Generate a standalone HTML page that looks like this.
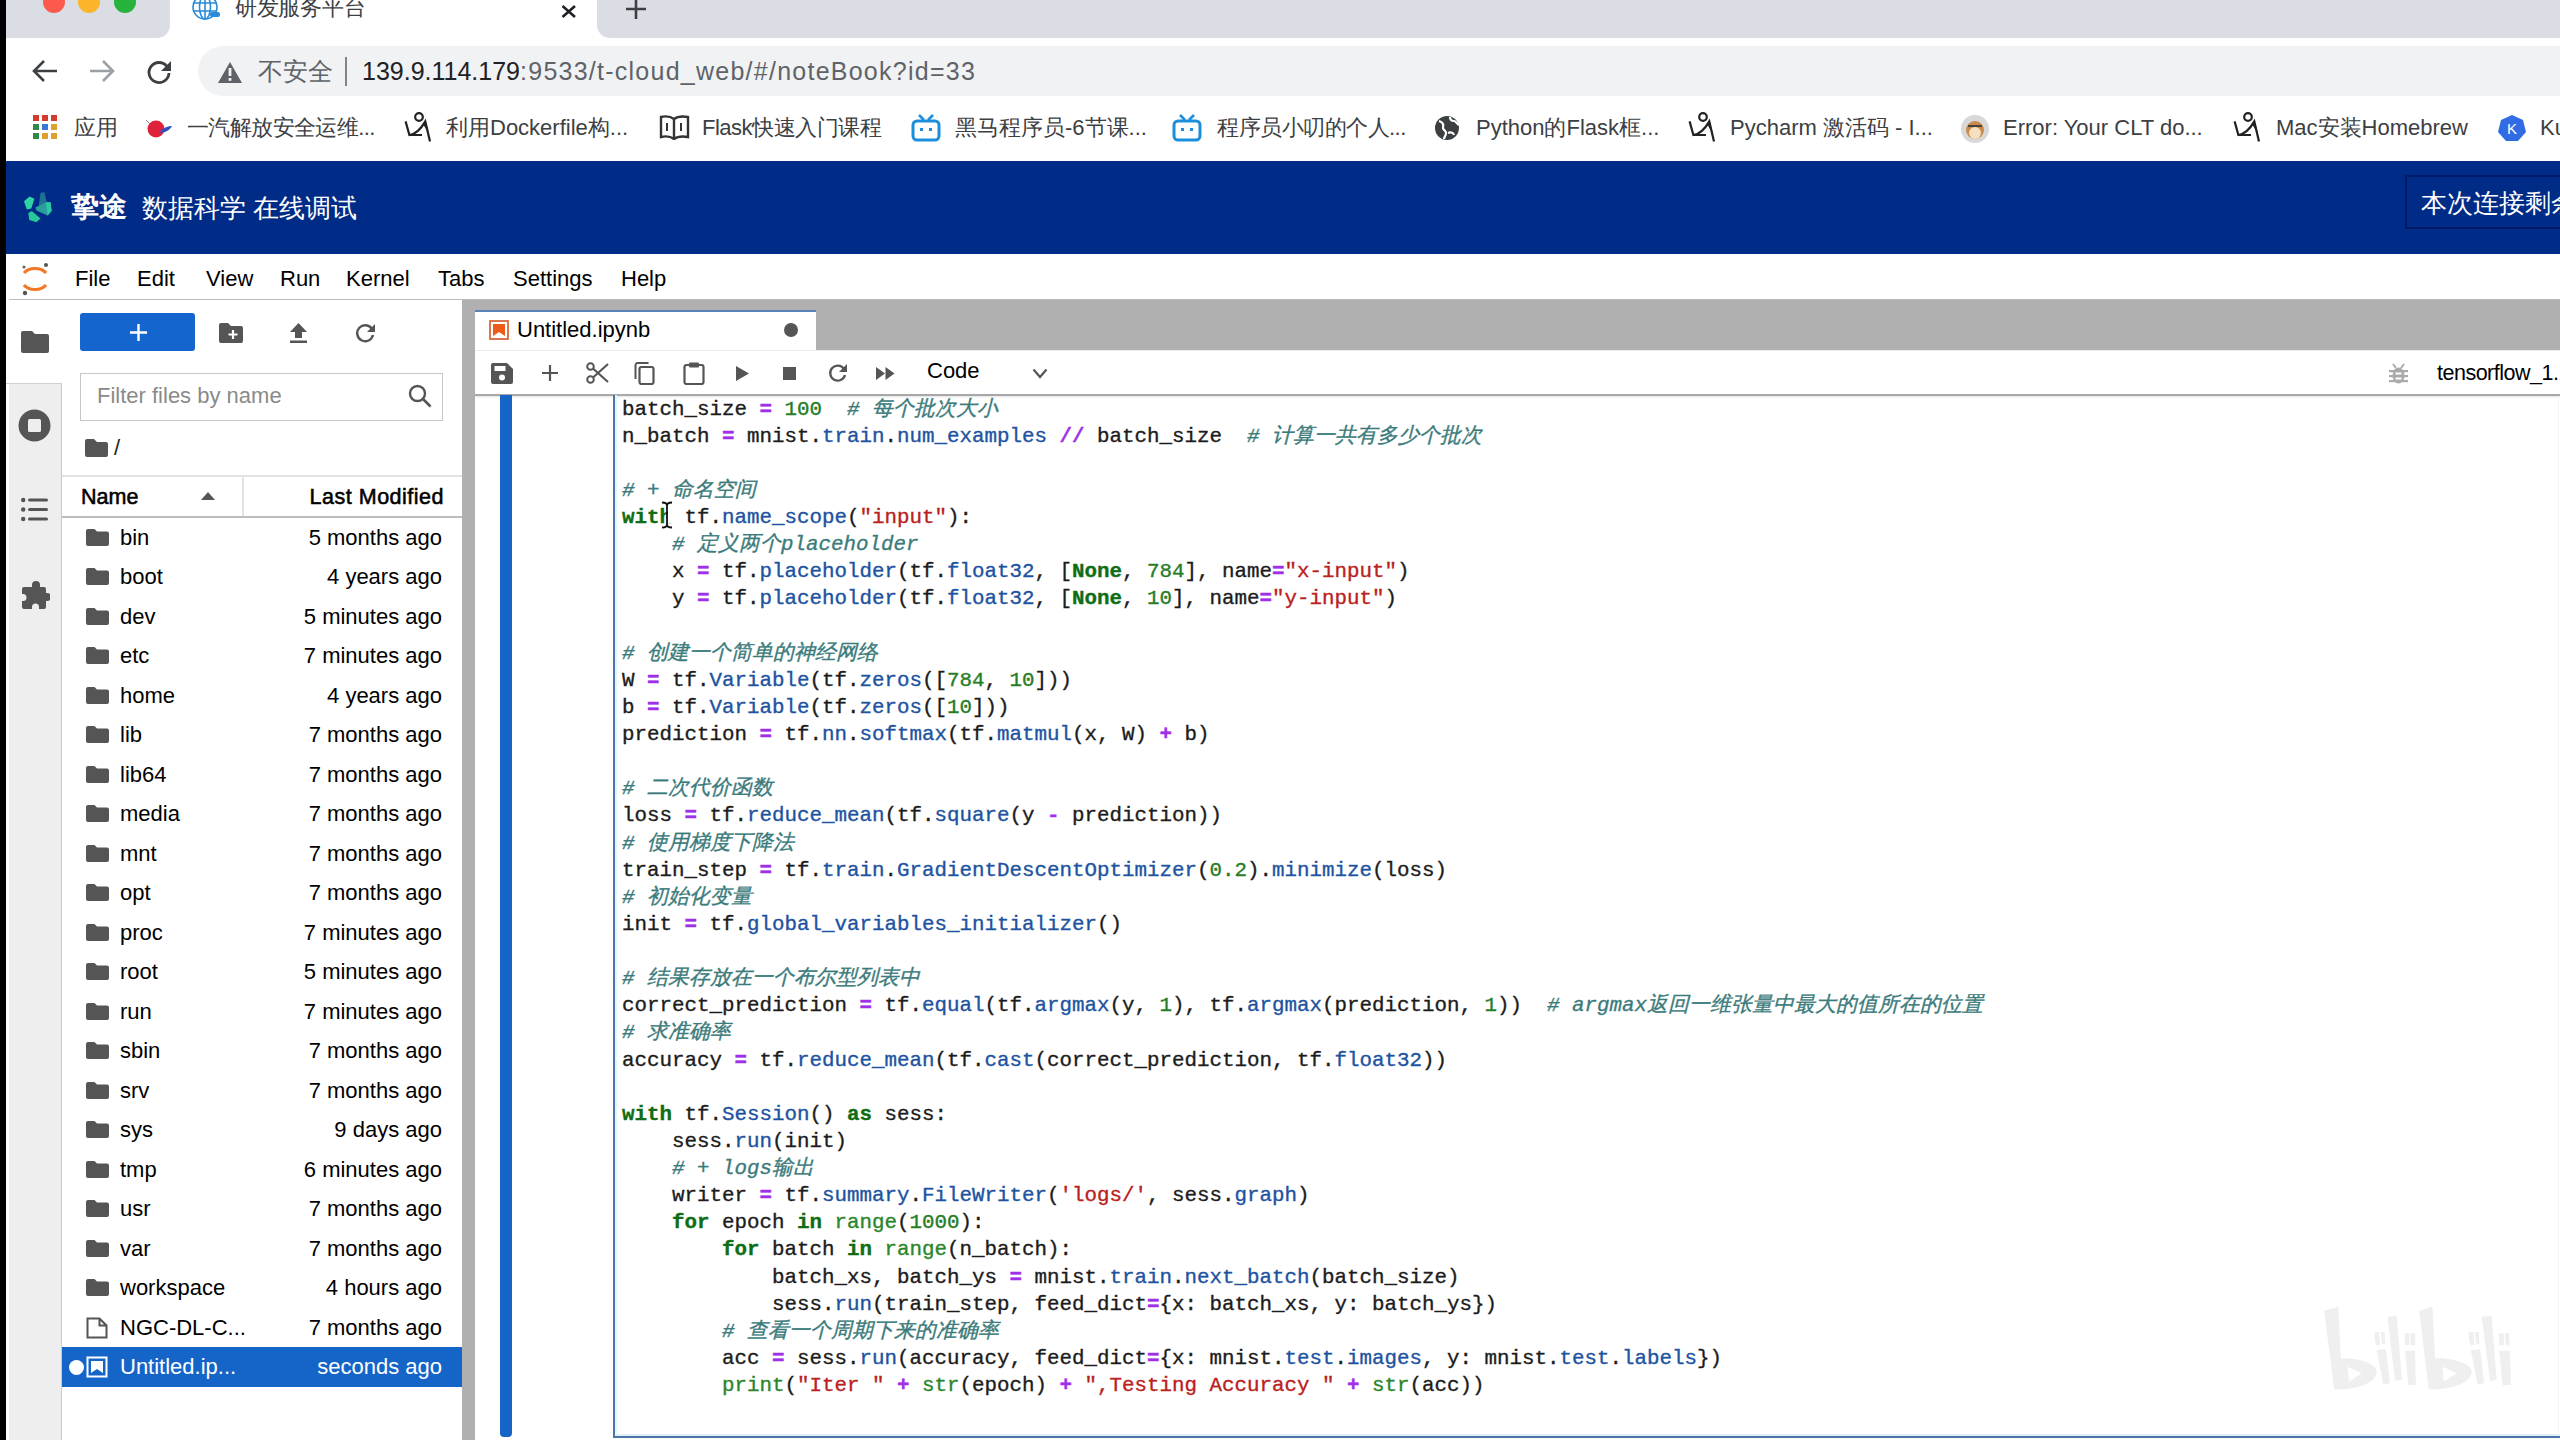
<!DOCTYPE html>
<html><head><meta charset="utf-8">
<style>
*{box-sizing:border-box}
html,body{margin:0;padding:0}
body{width:2560px;height:1440px;overflow:hidden;position:relative;background:#fff;font-family:"Liberation Sans",sans-serif;color:#222}
.a{position:absolute}
svg{display:block}
/* chrome */
.bm{position:absolute;top:113px;height:30px;font-size:22px;line-height:30px;color:#3c4043;white-space:nowrap}
/* menu */
.mi{position:absolute;top:264px;font-size:22px;line-height:30px;color:#000}
/* file rows */
.row{position:absolute;left:62px;width:400px;height:39.52px}
.fn{position:absolute;left:58px;top:0;font-size:22px;line-height:39.52px;color:#000;white-space:nowrap}
.fm{position:absolute;right:20px;top:0;font-size:22px;line-height:39.52px;color:#000;white-space:nowrap;text-align:right}
.fi{position:absolute;left:24px;top:11px}
/* code */
#code{position:absolute;left:622px;top:395.6px;font-family:"Liberation Mono",monospace;font-size:20.83px;line-height:27.13px;white-space:pre;color:#1c1c1c;-webkit-text-stroke:0.35px currentColor}
#code div{height:27.13px}
.k{color:#0f6e14;font-weight:bold}
.n{color:#267d26}
.s{color:#ba2121}
.c{color:#3b7b7b;font-style:italic}
.o{color:#a030e8;font-weight:bold}
.p{color:#1d53a0}
.b{color:#2a862a}
</style></head>
<body>
<!-- black strip left -->
<div class="a" style="left:0;top:0;width:6px;height:1440px;background:#000;z-index:50"></div>

<!-- ===== Chrome tab strip ===== -->
<div class="a" style="left:6px;top:0;width:164px;height:38px;background:#dadde3;border-bottom-right-radius:13px"></div>
<div class="a" style="left:597px;top:0;width:1963px;height:38px;background:#dadde3;border-bottom-left-radius:13px"></div>
<div class="a" style="left:43px;top:-9px;width:22px;height:22px;border-radius:50%;background:#fd5a4e"></div>
<div class="a" style="left:78px;top:-9px;width:22px;height:22px;border-radius:50%;background:#fcb52a"></div>
<div class="a" style="left:114px;top:-9px;width:22px;height:22px;border-radius:50%;background:#26b33b"></div>
<!-- tab globe icon -->
<svg class="a" style="left:191px;top:-6px" width="30" height="28" viewBox="0 0 30 28"><g fill="none" stroke="#2a8ad8" stroke-width="1.6"><circle cx="14" cy="13" r="12"/><ellipse cx="14" cy="13" rx="5.5" ry="12"/><path d="M2 9h24M2 17h24M14 1v24"/></g><rect x="19" y="18" width="10" height="5" rx="2" fill="#2a8ad8"/></svg>
<div class="a" style="left:235px;top:-7px;font-size:22px;line-height:30px;color:#3c4043;white-space:nowrap;letter-spacing:-0.3px">研发服务平台</div>
<svg class="a" style="left:559px;top:5px" width="20" height="13" viewBox="0 0 20 13"><path d="M3.5 1L16 12M16 1L3.5 12" stroke="#202124" stroke-width="2.6"/></svg>
<svg class="a" style="left:624px;top:-2px" width="24" height="22" viewBox="0 0 24 22"><path d="M12 0v21M2 11h20" stroke="#3c4043" stroke-width="2.6"/></svg>

<!-- ===== Address row ===== -->
<svg class="a" style="left:31px;top:58px" width="28" height="26" viewBox="0 0 28 26"><path d="M26 13H5M13 3L3 13l10 10" fill="none" stroke="#3c4043" stroke-width="2.6"/></svg>
<svg class="a" style="left:88px;top:58px" width="28" height="26" viewBox="0 0 28 26"><path d="M2 13h21M15 3l10 10-10 10" fill="none" stroke="#9aa0a6" stroke-width="2.6"/></svg>
<svg class="a" style="left:145px;top:58px" width="28" height="28" viewBox="0 0 28 28"><path d="M22 8.5A10 10 0 1 0 24 15" fill="none" stroke="#3c4043" stroke-width="2.8"/><path d="M26 3v10H16z" fill="#3c4043"/></svg>
<div class="a" style="left:198px;top:46px;width:2400px;height:50px;border-radius:25px;background:#f0f2f4"></div>
<svg class="a" style="left:218px;top:62px" width="24" height="21" viewBox="0 0 24 21"><path d="M12 0L24 21H0z" fill="#5f6368"/><rect x="10.6" y="6" width="2.8" height="8" fill="#f0f2f4"/><rect x="10.6" y="16" width="2.8" height="2.8" fill="#f0f2f4"/></svg>
<div class="a" style="left:258px;top:55px;font-size:25px;line-height:32px;color:#5f6368;white-space:nowrap">不安全</div>
<div class="a" style="left:345px;top:57px;width:2px;height:29px;background:#80868b"></div>
<div class="a" style="left:362px;top:55px;font-size:25px;line-height:32px;color:#5f6368;white-space:nowrap"><span style="color:#202124">139.9.114.179</span><span style="letter-spacing:1.25px">:9533/t-cloud_web/#/noteBook?id=33</span></div>



<!-- ===== Bookmarks ===== -->
<svg class="a" style="left:33px;top:115px" width="25" height="25" viewBox="0 0 25 25">
<rect x="0" y="0" width="6" height="6" fill="#d33b2c"/><rect x="9" y="0" width="6" height="6" fill="#d33b2c"/><rect x="18" y="0" width="6" height="6" fill="#d33b2c"/>
<rect x="0" y="9" width="6" height="6" fill="#2f8a4a"/><rect x="9" y="9" width="6" height="6" fill="#3a78d8"/><rect x="18" y="9" width="6" height="6" fill="#e0a030"/>
<rect x="0" y="18" width="6" height="6" fill="#2f8a4a"/><rect x="9" y="18" width="6" height="6" fill="#e0a030"/><rect x="18" y="18" width="6" height="6" fill="#e0a030"/></svg>
<div class="bm" style="left:74px">应用</div>
<svg class="a" style="left:144px;top:117px" width="30" height="22" viewBox="0 0 30 22"><circle cx="12" cy="12" r="8.5" fill="#e0213a"/><path d="M16 16c5 0 10-3 12-7-4 0-8 2-11 4z" fill="#3050c0"/><path d="M2 3l4 4" stroke="#888" stroke-width="1"/></svg>
<div class="bm" style="left:187px;letter-spacing:-0.6px">一汽解放安全运维...</div>
<svg class="a" style="left:403px;top:112px" width="30" height="32" viewBox="0 0 30 32"><circle cx="16" cy="5" r="3.8" fill="none" stroke="#222" stroke-width="2.2"/><path d="M2.6 9.4L6.4 23Q15 22 22.3 9.4L27 29.5M6.4 23H19" fill="none" stroke="#222" stroke-width="2.2"/><path d="M20 12L23 10L26 22z" fill="#222"/></svg>
<div class="bm" style="left:446px">利用Dockerfile构...</div>
<svg class="a" style="left:659px;top:114px" width="31" height="26" viewBox="0 0 31 26"><path d="M2 3c4-1 9-1 13 2 4-3 9-3 14-2v20c-5-1-10-1-14 2-4-3-9-3-13-2z M15 5v20" fill="none" stroke="#333" stroke-width="2.4"/><path d="M8 9v8M22 9v8" stroke="#333" stroke-width="2"/></svg>
<div class="bm" style="left:702px;letter-spacing:-0.5px">Flask快速入门课程</div>
<svg class="a" style="left:911px;top:114px" width="30" height="28" viewBox="0 0 30 28"><rect x="2" y="7" width="26" height="19" rx="4" fill="none" stroke="#1c8fdc" stroke-width="3"/><path d="M8 1l5 5M22 1l-5 5" stroke="#1c8fdc" stroke-width="2.6"/><rect x="9" y="14" width="3" height="3" fill="#1c8fdc"/><rect x="18" y="14" width="3" height="3" fill="#1c8fdc"/></svg>
<div class="bm" style="left:955px">黑马程序员-6节课...</div>
<svg class="a" style="left:1172px;top:114px" width="30" height="28" viewBox="0 0 30 28"><rect x="2" y="7" width="26" height="19" rx="4" fill="none" stroke="#1c8fdc" stroke-width="3"/><path d="M8 1l5 5M22 1l-5 5" stroke="#1c8fdc" stroke-width="2.6"/><rect x="9" y="14" width="3" height="3" fill="#1c8fdc"/><rect x="18" y="14" width="3" height="3" fill="#1c8fdc"/></svg>
<div class="bm" style="left:1217px;letter-spacing:-0.5px">程序员小叨的个人...</div>
<svg class="a" style="left:1434px;top:115px" width="26" height="26" viewBox="0 0 26 26"><circle cx="13" cy="13" r="12" fill="#3c4043"/><path d="M5 6c3 1 5 3 4 6s3 3 3 6-2 4-2 6M16 2c0 3 2 4 4 4s3 3 5 4M14 18c2-1 5-1 6 2" fill="none" stroke="#fff" stroke-width="2.2"/></svg>
<div class="bm" style="left:1476px">Python的Flask框...</div>
<svg class="a" style="left:1687px;top:112px" width="30" height="32" viewBox="0 0 30 32"><circle cx="16" cy="5" r="3.8" fill="none" stroke="#222" stroke-width="2.2"/><path d="M2.6 9.4L6.4 23Q15 22 22.3 9.4L27 29.5M6.4 23H19" fill="none" stroke="#222" stroke-width="2.2"/><path d="M20 12L23 10L26 22z" fill="#222"/></svg>
<div class="bm" style="left:1730px">Pycharm 激活码 - I...</div>
<svg class="a" style="left:1960px;top:114px" width="30" height="30" viewBox="0 0 30 30"><circle cx="15" cy="15" r="14" fill="#d8d8d8"/><circle cx="15" cy="16" r="9" fill="#c98a4a"/><circle cx="15" cy="19" r="6" fill="#f5e0c0"/><path d="M8 12h14" stroke="#444" stroke-width="2"/></svg>
<div class="bm" style="left:2003px">Error: Your CLT do...</div>
<svg class="a" style="left:2232px;top:112px" width="30" height="32" viewBox="0 0 30 32"><circle cx="16" cy="5" r="3.8" fill="none" stroke="#222" stroke-width="2.2"/><path d="M2.6 9.4L6.4 23Q15 22 22.3 9.4L27 29.5M6.4 23H19" fill="none" stroke="#222" stroke-width="2.2"/><path d="M20 12L23 10L26 22z" fill="#222"/></svg>
<div class="bm" style="left:2276px">Mac安装Homebrew</div>
<svg class="a" style="left:2498px;top:114px" width="28" height="28" viewBox="0 0 28 28"><path d="M14 1l11 5 3 12-8 9H8l-8-9 3-12z" fill="#326ce5"/><text x="14" y="20" font-size="15" fill="#fff" text-anchor="middle" font-family="Liberation Sans">K</text></svg>
<div class="bm" style="left:2540px">Ku</div>

<!-- ===== Blue header ===== -->
<div class="a" style="left:6px;top:161px;width:2554px;height:93px;background:#002b87"></div>
<svg class="a" style="left:23px;top:191px" width="31" height="33" viewBox="0 0 31 33"><path d="M17.5 1.7L21.5 1.2L23.6 10.8L15.4 17Z" fill="#1f6f96"/><path d="M1 10.3L6.6 5.5L11.4 7.8L8.3 17.4L3.8 18.5Z" fill="#2fd4a4"/><path d="M5.3 22L8.8 20L17.5 27.6L13.4 31.2L6.3 29.1Z" fill="#25c896"/><path d="M12.4 16.4L23.6 10.8L27.6 11.3L28.6 20L24.6 24.6L13.4 19.5Z" fill="#2a9e9c"/><path d="M23 11.5L27.6 11.3L28.6 20L24.6 24.6Z" fill="#2cc9a4"/></svg>
<div class="a" style="left:71px;top:190px;font-size:28px;line-height:34px;color:#fff;font-weight:bold;white-space:nowrap">挚途</div>
<div class="a" style="left:142px;top:191px;font-size:26px;line-height:34px;color:#fff;white-space:nowrap">数据科学 在线调试</div>
<div class="a" style="left:2405px;top:175px;width:200px;height:54px;border:2px solid #001a66;background:#002b87"></div>
<div class="a" style="left:2421px;top:186px;font-size:26px;line-height:34px;color:#fff;white-space:nowrap">本次连接剩余时间</div>

<!-- ===== Jupyter menubar ===== -->
<div class="a" style="left:6px;top:254px;width:2554px;height:45px;background:#fff"></div>
<svg class="a" style="left:20px;top:261px" width="30" height="36" viewBox="0 0 30 36"><path d="M4 12c5-6 17-6 22 0" fill="none" stroke="#f37726" stroke-width="3.2"/><path d="M4 24c5 6 17 6 22 0" fill="none" stroke="#f37726" stroke-width="3.2"/><circle cx="26" cy="4" r="2" fill="#555"/><circle cx="4" cy="6" r="1.6" fill="#666"/><circle cx="5" cy="32" r="2.2" fill="#555"/></svg>
<div class="mi" style="left:75px">File</div>
<div class="mi" style="left:137px">Edit</div>
<div class="mi" style="left:206px">View</div>
<div class="mi" style="left:280px">Run</div>
<div class="mi" style="left:346px">Kernel</div>
<div class="mi" style="left:438px">Tabs</div>
<div class="mi" style="left:513px">Settings</div>
<div class="mi" style="left:621px">Help</div>


<!-- ===== Left activity sidebar ===== -->
<div class="a" style="left:9px;top:299px;width:53px;height:1141px;background:#eeeeee;border-right:1px solid #c9c9c9"></div>
<div class="a" style="left:6px;top:299px;width:56px;height:85px;background:#fff"></div>
<div class="a" style="left:6px;top:383px;width:56px;height:1px;background:#d0d0d0"></div>
<svg class="a" style="left:21px;top:330px" width="28" height="24" viewBox="0 0 28 24"><path d="M2 1h9l3 3h12a2 2 0 0 1 2 2v15a2 2 0 0 1-2 2H2a2 2 0 0 1-2-2V3a2 2 0 0 1 2-2z" fill="#555"/></svg>
<svg class="a" style="left:18px;top:409px" width="33" height="33" viewBox="0 0 33 33"><circle cx="16.5" cy="16.5" r="16" fill="#555"/><rect x="10" y="10" width="13" height="13" rx="1.5" fill="#eee"/></svg>
<svg class="a" style="left:21px;top:497px" width="27" height="25" viewBox="0 0 27 25"><g fill="#555"><circle cx="2.2" cy="3" r="2.2"/><circle cx="2.2" cy="12.5" r="2.2"/><circle cx="2.2" cy="22" r="2.2"/><rect x="7" y="1.5" width="20" height="3" rx="1.5"/><rect x="7" y="11" width="20" height="3" rx="1.5"/><rect x="7" y="20.5" width="20" height="3" rx="1.5"/></g></svg>
<svg class="a" style="left:20px;top:580px" width="30" height="31" viewBox="0 0 30 31"><path d="M8 7h4V5a4 4 0 0 1 8 0v2h4a2 2 0 0 1 2 2v4h1a4 4 0 0 1 0 8h-1v6a2 2 0 0 1-2 2h-5v-2a3.5 3.5 0 0 0-7 0v2H4a2 2 0 0 1-2-2v-6h1a3.5 3.5 0 0 0 0-7H2V9a2 2 0 0 1 2-2z" fill="#555"/></svg>

<!-- ===== File browser ===== -->
<div class="a" style="left:80px;top:313px;width:115px;height:38px;background:#1565cf;border-radius:3px"></div>
<svg class="a" style="left:130px;top:324px" width="17" height="17" viewBox="0 0 17 17"><path d="M8.5 0v17M0 8.5h17" stroke="#fff" stroke-width="2.4"/></svg>
<svg class="a" style="left:219px;top:323px" width="24" height="20" viewBox="0 0 24 20"><path d="M2 0h7l3 3h10a2 2 0 0 1 2 2v13a2 2 0 0 1-2 2H2a2 2 0 0 1-2-2V2a2 2 0 0 1 2-2z" fill="#555"/><path d="M14 7v9M9.5 11.5h9" stroke="#fff" stroke-width="2.2"/></svg>
<svg class="a" style="left:290px;top:323px" width="17" height="20" viewBox="0 0 17 20"><path d="M8.5 0L17 9h-5v6H5V9H0z" fill="#555"/><rect x="0" y="17.5" width="17" height="2.5" fill="#555"/></svg>
<svg class="a" style="left:355px;top:323px" width="21" height="20" viewBox="0 0 21 20"><path d="M17 6A8 8 0 1 0 18 12" fill="none" stroke="#555" stroke-width="2.4"/><path d="M20 1v8h-8z" fill="#555"/></svg>
<div class="a" style="left:80px;top:373px;width:363px;height:48px;border:1.5px solid #c6c6c6;background:#fff"></div>
<div class="a" style="left:97px;top:381px;font-size:22px;line-height:30px;color:#8a8a8a;white-space:nowrap">Filter files by name</div>
<svg class="a" style="left:408px;top:384px" width="24" height="24" viewBox="0 0 24 24"><circle cx="9.5" cy="9.5" r="7.5" fill="none" stroke="#555" stroke-width="2.4"/><path d="M15 15l7.5 7.5" stroke="#555" stroke-width="2.6"/></svg>
<svg class="a" style="left:85px;top:439px" width="23" height="18" viewBox="0 0 23 18"><path d="M2 0h7l3 3h9a2 2 0 0 1 2 2v11a2 2 0 0 1-2 2H2a2 2 0 0 1-2-2V2a2 2 0 0 1 2-2z" fill="#555"/></svg>
<div class="a" style="left:114px;top:433px;font-size:22px;line-height:30px;color:#222">/</div>
<div class="a" style="left:62px;top:475px;width:400px;height:1.5px;background:#e2e2e2"></div>
<div class="a" style="left:62px;top:516px;width:400px;height:1.5px;background:#bdbdbd"></div>
<div class="a" style="left:242px;top:476px;width:1.5px;height:40px;background:#e2e2e2"></div>
<div class="a" style="left:81px;top:482px;font-size:21.5px;line-height:30px;color:#000;-webkit-text-stroke:0.55px #000">Name</div>
<svg class="a" style="left:201px;top:492px" width="14" height="8" viewBox="0 0 14 8"><path d="M7 0L14 8H0z" fill="#555"/></svg>
<div class="a" style="left:242px;top:482px;width:202px;text-align:right;font-size:21.5px;line-height:30px;color:#000;-webkit-text-stroke:0.55px #000;letter-spacing:0.5px">Last Modified</div>
<div class="row" style="top:517.50px"><svg class="fi" width="23" height="17" viewBox="0 0 23 17"><path d="M2 0h6.5l2.5 2.5h10a2 2 0 0 1 2 2V15a2 2 0 0 1-2 2H2a2 2 0 0 1-2-2V2a2 2 0 0 1 2-2z" fill="#555"/></svg><div class="fn">bin</div><div class="fm">5 months ago</div></div>
<div class="row" style="top:557.02px"><svg class="fi" width="23" height="17" viewBox="0 0 23 17"><path d="M2 0h6.5l2.5 2.5h10a2 2 0 0 1 2 2V15a2 2 0 0 1-2 2H2a2 2 0 0 1-2-2V2a2 2 0 0 1 2-2z" fill="#555"/></svg><div class="fn">boot</div><div class="fm">4 years ago</div></div>
<div class="row" style="top:596.54px"><svg class="fi" width="23" height="17" viewBox="0 0 23 17"><path d="M2 0h6.5l2.5 2.5h10a2 2 0 0 1 2 2V15a2 2 0 0 1-2 2H2a2 2 0 0 1-2-2V2a2 2 0 0 1 2-2z" fill="#555"/></svg><div class="fn">dev</div><div class="fm">5 minutes ago</div></div>
<div class="row" style="top:636.06px"><svg class="fi" width="23" height="17" viewBox="0 0 23 17"><path d="M2 0h6.5l2.5 2.5h10a2 2 0 0 1 2 2V15a2 2 0 0 1-2 2H2a2 2 0 0 1-2-2V2a2 2 0 0 1 2-2z" fill="#555"/></svg><div class="fn">etc</div><div class="fm">7 minutes ago</div></div>
<div class="row" style="top:675.58px"><svg class="fi" width="23" height="17" viewBox="0 0 23 17"><path d="M2 0h6.5l2.5 2.5h10a2 2 0 0 1 2 2V15a2 2 0 0 1-2 2H2a2 2 0 0 1-2-2V2a2 2 0 0 1 2-2z" fill="#555"/></svg><div class="fn">home</div><div class="fm">4 years ago</div></div>
<div class="row" style="top:715.10px"><svg class="fi" width="23" height="17" viewBox="0 0 23 17"><path d="M2 0h6.5l2.5 2.5h10a2 2 0 0 1 2 2V15a2 2 0 0 1-2 2H2a2 2 0 0 1-2-2V2a2 2 0 0 1 2-2z" fill="#555"/></svg><div class="fn">lib</div><div class="fm">7 months ago</div></div>
<div class="row" style="top:754.62px"><svg class="fi" width="23" height="17" viewBox="0 0 23 17"><path d="M2 0h6.5l2.5 2.5h10a2 2 0 0 1 2 2V15a2 2 0 0 1-2 2H2a2 2 0 0 1-2-2V2a2 2 0 0 1 2-2z" fill="#555"/></svg><div class="fn">lib64</div><div class="fm">7 months ago</div></div>
<div class="row" style="top:794.14px"><svg class="fi" width="23" height="17" viewBox="0 0 23 17"><path d="M2 0h6.5l2.5 2.5h10a2 2 0 0 1 2 2V15a2 2 0 0 1-2 2H2a2 2 0 0 1-2-2V2a2 2 0 0 1 2-2z" fill="#555"/></svg><div class="fn">media</div><div class="fm">7 months ago</div></div>
<div class="row" style="top:833.66px"><svg class="fi" width="23" height="17" viewBox="0 0 23 17"><path d="M2 0h6.5l2.5 2.5h10a2 2 0 0 1 2 2V15a2 2 0 0 1-2 2H2a2 2 0 0 1-2-2V2a2 2 0 0 1 2-2z" fill="#555"/></svg><div class="fn">mnt</div><div class="fm">7 months ago</div></div>
<div class="row" style="top:873.18px"><svg class="fi" width="23" height="17" viewBox="0 0 23 17"><path d="M2 0h6.5l2.5 2.5h10a2 2 0 0 1 2 2V15a2 2 0 0 1-2 2H2a2 2 0 0 1-2-2V2a2 2 0 0 1 2-2z" fill="#555"/></svg><div class="fn">opt</div><div class="fm">7 months ago</div></div>
<div class="row" style="top:912.70px"><svg class="fi" width="23" height="17" viewBox="0 0 23 17"><path d="M2 0h6.5l2.5 2.5h10a2 2 0 0 1 2 2V15a2 2 0 0 1-2 2H2a2 2 0 0 1-2-2V2a2 2 0 0 1 2-2z" fill="#555"/></svg><div class="fn">proc</div><div class="fm">7 minutes ago</div></div>
<div class="row" style="top:952.22px"><svg class="fi" width="23" height="17" viewBox="0 0 23 17"><path d="M2 0h6.5l2.5 2.5h10a2 2 0 0 1 2 2V15a2 2 0 0 1-2 2H2a2 2 0 0 1-2-2V2a2 2 0 0 1 2-2z" fill="#555"/></svg><div class="fn">root</div><div class="fm">5 minutes ago</div></div>
<div class="row" style="top:991.74px"><svg class="fi" width="23" height="17" viewBox="0 0 23 17"><path d="M2 0h6.5l2.5 2.5h10a2 2 0 0 1 2 2V15a2 2 0 0 1-2 2H2a2 2 0 0 1-2-2V2a2 2 0 0 1 2-2z" fill="#555"/></svg><div class="fn">run</div><div class="fm">7 minutes ago</div></div>
<div class="row" style="top:1031.26px"><svg class="fi" width="23" height="17" viewBox="0 0 23 17"><path d="M2 0h6.5l2.5 2.5h10a2 2 0 0 1 2 2V15a2 2 0 0 1-2 2H2a2 2 0 0 1-2-2V2a2 2 0 0 1 2-2z" fill="#555"/></svg><div class="fn">sbin</div><div class="fm">7 months ago</div></div>
<div class="row" style="top:1070.78px"><svg class="fi" width="23" height="17" viewBox="0 0 23 17"><path d="M2 0h6.5l2.5 2.5h10a2 2 0 0 1 2 2V15a2 2 0 0 1-2 2H2a2 2 0 0 1-2-2V2a2 2 0 0 1 2-2z" fill="#555"/></svg><div class="fn">srv</div><div class="fm">7 months ago</div></div>
<div class="row" style="top:1110.30px"><svg class="fi" width="23" height="17" viewBox="0 0 23 17"><path d="M2 0h6.5l2.5 2.5h10a2 2 0 0 1 2 2V15a2 2 0 0 1-2 2H2a2 2 0 0 1-2-2V2a2 2 0 0 1 2-2z" fill="#555"/></svg><div class="fn">sys</div><div class="fm">9 days ago</div></div>
<div class="row" style="top:1149.82px"><svg class="fi" width="23" height="17" viewBox="0 0 23 17"><path d="M2 0h6.5l2.5 2.5h10a2 2 0 0 1 2 2V15a2 2 0 0 1-2 2H2a2 2 0 0 1-2-2V2a2 2 0 0 1 2-2z" fill="#555"/></svg><div class="fn">tmp</div><div class="fm">6 minutes ago</div></div>
<div class="row" style="top:1189.34px"><svg class="fi" width="23" height="17" viewBox="0 0 23 17"><path d="M2 0h6.5l2.5 2.5h10a2 2 0 0 1 2 2V15a2 2 0 0 1-2 2H2a2 2 0 0 1-2-2V2a2 2 0 0 1 2-2z" fill="#555"/></svg><div class="fn">usr</div><div class="fm">7 months ago</div></div>
<div class="row" style="top:1228.86px"><svg class="fi" width="23" height="17" viewBox="0 0 23 17"><path d="M2 0h6.5l2.5 2.5h10a2 2 0 0 1 2 2V15a2 2 0 0 1-2 2H2a2 2 0 0 1-2-2V2a2 2 0 0 1 2-2z" fill="#555"/></svg><div class="fn">var</div><div class="fm">7 months ago</div></div>
<div class="row" style="top:1268.38px"><svg class="fi" width="23" height="17" viewBox="0 0 23 17"><path d="M2 0h6.5l2.5 2.5h10a2 2 0 0 1 2 2V15a2 2 0 0 1-2 2H2a2 2 0 0 1-2-2V2a2 2 0 0 1 2-2z" fill="#555"/></svg><div class="fn">workspace</div><div class="fm">4 hours ago</div></div>
<div class="row" style="top:1307.90px"><svg class="fi" style="top:9px" width="22" height="22" viewBox="0 0 22 22"><path d="M1.5 1.5h12l7 7v12h-19z M13.5 1.5v7h7" fill="none" stroke="#555" stroke-width="2"/></svg><div class="fn">NGC-DL-C...</div><div class="fm">7 months ago</div></div>
<div class="row" style="top:1347.42px;background:#1565c8"><div class="a" style="left:7px;top:12.5px;width:15px;height:15px;border-radius:50%;background:#fff"></div><svg class="fi" style="top:9px" width="22" height="22" viewBox="0 0 22 22"><rect x="1.5" y="1.5" width="19" height="19" fill="none" stroke="#fff" stroke-width="2"/><path d="M5 5h12v12l-6-4-6 4z" fill="#fff"/></svg><div class="fn" style="color:#fff">Untitled.ip...</div><div class="fm" style="color:#fff">seconds ago</div></div>

<!-- ===== splitter & main tab bar ===== -->
<div class="a" style="left:462px;top:299px;width:2098px;height:51px;background:#b0b0b0"></div>
<div class="a" style="left:462px;top:299px;width:13px;height:1141px;background:#b0b0b0"></div>
<div class="a" style="left:475px;top:310px;width:341px;height:40px;background:#fff;border-top:2px solid #5b82b8"></div><div class="a" style="left:475px;top:349.5px;width:2085px;height:1px;background:#ececec"></div>
<svg class="a" style="left:489px;top:320px" width="20" height="20" viewBox="0 0 20 20"><rect x="1" y="1" width="18" height="18" fill="none" stroke="#d8683a" stroke-width="1.8"/><path d="M4 4h12v12l-6-4-6 4z" fill="#ee5a18"/></svg>
<div class="a" style="left:517px;top:315px;font-size:22px;line-height:30px;color:#000;white-space:nowrap">Untitled.ipynb</div>
<div class="a" style="left:784px;top:323px;width:14px;height:14px;border-radius:50%;background:#555"></div>


<div class="a" style="left:9px;top:298.5px;width:2551px;height:1.5px;background:#bdbdbd;z-index:5"></div>
<!-- ===== Notebook toolbar ===== -->
<div class="a" style="left:475px;top:394px;width:2085px;height:1.5px;background:#a8a8a8;box-shadow:0 1px 2px rgba(0,0,0,0.12)"></div>
<svg class="a" style="left:491px;top:363px" width="22" height="21" viewBox="0 0 22 21"><path d="M2 0h14l6 6v13a2 2 0 0 1-2 2H2a2 2 0 0 1-2-2V2a2 2 0 0 1 2-2z" fill="#555"/><rect x="3.5" y="3" width="11" height="5" fill="#fff"/><circle cx="11" cy="14.5" r="3" fill="#fff"/></svg>
<svg class="a" style="left:541px;top:364px" width="18" height="18" viewBox="0 0 18 18"><path d="M9 1v16M1 9h16" stroke="#555" stroke-width="2.2"/></svg>
<svg class="a" style="left:586px;top:362px" width="23" height="22" viewBox="0 0 23 22"><circle cx="4.5" cy="4.5" r="3.3" fill="none" stroke="#555" stroke-width="2"/><circle cx="4.5" cy="17.5" r="3.3" fill="none" stroke="#555" stroke-width="2"/><path d="M7 6.5L22 20M7 15.5L22 2" stroke="#555" stroke-width="2.2"/></svg>
<svg class="a" style="left:634px;top:362px" width="22" height="23" viewBox="0 0 22 23"><path d="M1.5 17V3a2 2 0 0 1 2-2h11" fill="none" stroke="#555" stroke-width="2"/><rect x="5.5" y="5" width="14" height="17" rx="2" fill="none" stroke="#555" stroke-width="2.2"/></svg>
<svg class="a" style="left:683px;top:361px" width="22" height="24" viewBox="0 0 22 24"><rect x="1.5" y="4" width="19" height="19" rx="2" fill="none" stroke="#555" stroke-width="2.2"/><rect x="6" y="1.5" width="10" height="5" rx="1" fill="#555"/></svg>
<svg class="a" style="left:736px;top:366px" width="13" height="15" viewBox="0 0 13 15"><path d="M0 0L13 7.5L0 15z" fill="#555"/></svg>
<div class="a" style="left:783px;top:366.5px;width:13px;height:13px;background:#555"></div>
<svg class="a" style="left:828px;top:363px" width="20" height="20" viewBox="0 0 20 20"><path d="M16 6A7.5 7.5 0 1 0 17 12" fill="none" stroke="#555" stroke-width="2.3"/><path d="M19 1v8h-8z" fill="#555"/></svg>
<svg class="a" style="left:876px;top:367px" width="19" height="13" viewBox="0 0 19 13"><path d="M0 0l9 6.5L0 13zM9.5 0l9 6.5-9 6.5z" fill="#555"/></svg>
<div class="a" style="left:927px;top:356px;font-size:22px;line-height:30px;color:#000">Code</div>
<svg class="a" style="left:1032px;top:368px" width="16" height="11" viewBox="0 0 16 11"><path d="M1.5 1.5L8 9l6.5-7.5" fill="none" stroke="#555" stroke-width="2.2"/></svg>
<svg class="a" style="left:2389px;top:363px" width="19" height="21" viewBox="0 0 19 21"><g fill="#aaa"><path d="M4 1l3 4M15 1l-3 4" stroke="#aaa" stroke-width="2"/><ellipse cx="9.5" cy="12.5" rx="6" ry="8"/><rect x="0" y="7" width="19" height="2.2"/><rect x="0" y="12" width="19" height="2.2"/><rect x="0" y="17" width="19" height="2.2"/></g><rect x="6.5" y="9.5" width="6" height="2" fill="#fff"/><rect x="6.5" y="14.5" width="6" height="2" fill="#fff"/></svg>
<div class="a" style="left:2437px;top:358px;font-size:21.5px;line-height:30px;color:#000;white-space:nowrap;letter-spacing:-0.5px">tensorflow_1.15</div>

<!-- ===== Cell ===== -->
<div class="a" style="left:500px;top:395px;width:11.5px;height:1042px;background:#1565c8;border-radius:0 0 4px 4px"></div>
<div class="a" style="left:613px;top:395px;width:2px;height:1043px;background:#4b74a8"></div>
<div class="a" style="left:613px;top:1436px;width:1947px;height:2px;background:#4b74a8"></div>
<div class="a" style="left:615px;top:1434px;width:1945px;height:2px;background:#dff0fb"></div>
<div class="a" style="left:615px;top:395px;width:2px;height:1040px;background:#e6f4fc"></div>
<div id="code"><div><span>batch_size <span class="o">=</span> <span class="n">100</span>  <span class="c"># 每个批次大小</span></span></div><div>n_batch <span class="o">=</span> mnist.<span class="p">train</span>.<span class="p">num_examples</span> <span class="o">//</span> batch_size  <span class="c"># 计算一共有多少个批次</span></div><div> </div><div><span class="c"># + 命名空间</span></div><div><span class="k">with</span> tf.<span class="p">name_scope</span>(<span class="s">"input"</span>):</div><div>    <span class="c"># 定义两个placeholder</span></div><div>    x <span class="o">=</span> tf.<span class="p">placeholder</span>(tf.<span class="p">float32</span>, [<span class="k">None</span>, <span class="n">784</span>], name<span class="o">=</span><span class="s">"x-input"</span>)</div><div>    y <span class="o">=</span> tf.<span class="p">placeholder</span>(tf.<span class="p">float32</span>, [<span class="k">None</span>, <span class="n">10</span>], name<span class="o">=</span><span class="s">"y-input"</span>)</div><div> </div><div><span class="c"># 创建一个简单的神经网络</span></div><div>W <span class="o">=</span> tf.<span class="p">Variable</span>(tf.<span class="p">zeros</span>([<span class="n">784</span>, <span class="n">10</span>]))</div><div>b <span class="o">=</span> tf.<span class="p">Variable</span>(tf.<span class="p">zeros</span>([<span class="n">10</span>]))</div><div>prediction <span class="o">=</span> tf.<span class="p">nn</span>.<span class="p">softmax</span>(tf.<span class="p">matmul</span>(x, W) <span class="o">+</span> b)</div><div> </div><div><span class="c"># 二次代价函数</span></div><div>loss <span class="o">=</span> tf.<span class="p">reduce_mean</span>(tf.<span class="p">square</span>(y <span class="o">-</span> prediction))</div><div><span class="c"># 使用梯度下降法</span></div><div>train_step <span class="o">=</span> tf.<span class="p">train</span>.<span class="p">GradientDescentOptimizer</span>(<span class="n">0.2</span>).<span class="p">minimize</span>(loss)</div><div><span class="c"># 初始化变量</span></div><div>init <span class="o">=</span> tf.<span class="p">global_variables_initializer</span>()</div><div> </div><div><span class="c"># 结果存放在一个布尔型列表中</span></div><div>correct_prediction <span class="o">=</span> tf.<span class="p">equal</span>(tf.<span class="p">argmax</span>(y, <span class="n">1</span>), tf.<span class="p">argmax</span>(prediction, <span class="n">1</span>))  <span class="c"># argmax返回一维张量中最大的值所在的位置</span></div><div><span class="c"># 求准确率</span></div><div>accuracy <span class="o">=</span> tf.<span class="p">reduce_mean</span>(tf.<span class="p">cast</span>(correct_prediction, tf.<span class="p">float32</span>))</div><div> </div><div><span class="k">with</span> tf.<span class="p">Session</span>() <span class="k">as</span> sess:</div><div>    sess.<span class="p">run</span>(init)</div><div>    <span class="c"># + logs输出</span></div><div>    writer <span class="o">=</span> tf.<span class="p">summary</span>.<span class="p">FileWriter</span>(<span class="s">'logs/'</span>, sess.<span class="p">graph</span>)</div><div>    <span class="k">for</span> epoch <span class="k">in</span> <span class="b">range</span>(<span class="n">1000</span>):</div><div>        <span class="k">for</span> batch <span class="k">in</span> <span class="b">range</span>(n_batch):</div><div>            batch_xs, batch_ys <span class="o">=</span> mnist.<span class="p">train</span>.<span class="p">next_batch</span>(batch_size)</div><div>            sess.<span class="p">run</span>(train_step, feed_dict<span class="o">=</span>{x: batch_xs, y: batch_ys})</div><div>        <span class="c"># 查看一个周期下来的准确率</span></div><div>        acc <span class="o">=</span> sess.<span class="p">run</span>(accuracy, feed_dict<span class="o">=</span>{x: mnist.<span class="p">test</span>.<span class="p">images</span>, y: mnist.<span class="p">test</span>.<span class="p">labels</span>})</div><div>        <span class="b">print</span>(<span class="s">"Iter "</span> <span class="o">+</span> <span class="b">str</span>(epoch) <span class="o">+</span> <span class="s">",Testing Accuracy "</span> <span class="o">+</span> <span class="b">str</span>(acc))</div></div>

<!-- I-beam cursor -->
<div class="a" style="left:668px;top:506px;width:4px;height:17px;background:#fff"></div>
<svg class="a" style="left:661px;top:501px" width="12" height="28" viewBox="0 0 12 28"><path d="M1 1.5c3 0 5 1 5 3v19c0 2-2 3-5 3M11 1.5c-3 0-5 1-5 3v19c0 2 2 3 5 3" fill="none" stroke="#111" stroke-width="1.8"/></svg>

<!-- bilibili watermark -->
<svg class="a" style="left:2200px;top:1200px" width="360" height="240" viewBox="0 0 2160 1440"><g fill="#efefef" fill-rule="evenodd">
<path d="M745 665L830 640L845 950C960 945 1060 985 1060 1030C1060 1090 960 1135 830 1135L805 1135Z M885 1000L970 1040L893 1090Z"/>
<path d="M1045 797L1075 792L1082 868L1055 872Z M1085 792L1108 790L1112 865L1092 866Z M1060 900L1115 895L1140 1100L1100 1105Z"/>
<path d="M1125 700L1180 695L1212 1080L1170 1085Z"/>
<path d="M1227 800L1255 800L1257 872L1232 872Z M1262 800L1290 800L1292 872L1266 872Z M1230 905L1290 905L1295 1110L1250 1110Z"/>
<path d="M1315 665L1395 640L1410 950C1525 945 1630 985 1630 1030C1630 1090 1530 1135 1395 1135L1372 1135Z M1455 1000L1540 1040L1462 1090Z"/>
<path d="M1610 797L1640 792L1647 868L1620 872Z M1650 792L1673 790L1677 865L1657 866Z M1625 900L1680 895L1705 1100L1665 1105Z"/>
<path d="M1690 700L1750 695L1780 1080L1740 1085Z"/>
<path d="M1792 800L1822 800L1824 872L1797 872Z M1830 800L1855 800L1857 872L1834 872Z M1795 905L1860 905L1865 1110L1815 1110Z"/>
</g></svg>
<div class="a" style="left:2558px;top:396px;width:1px;height:1040px;background:#f4f4f4"></div>

</body></html>
